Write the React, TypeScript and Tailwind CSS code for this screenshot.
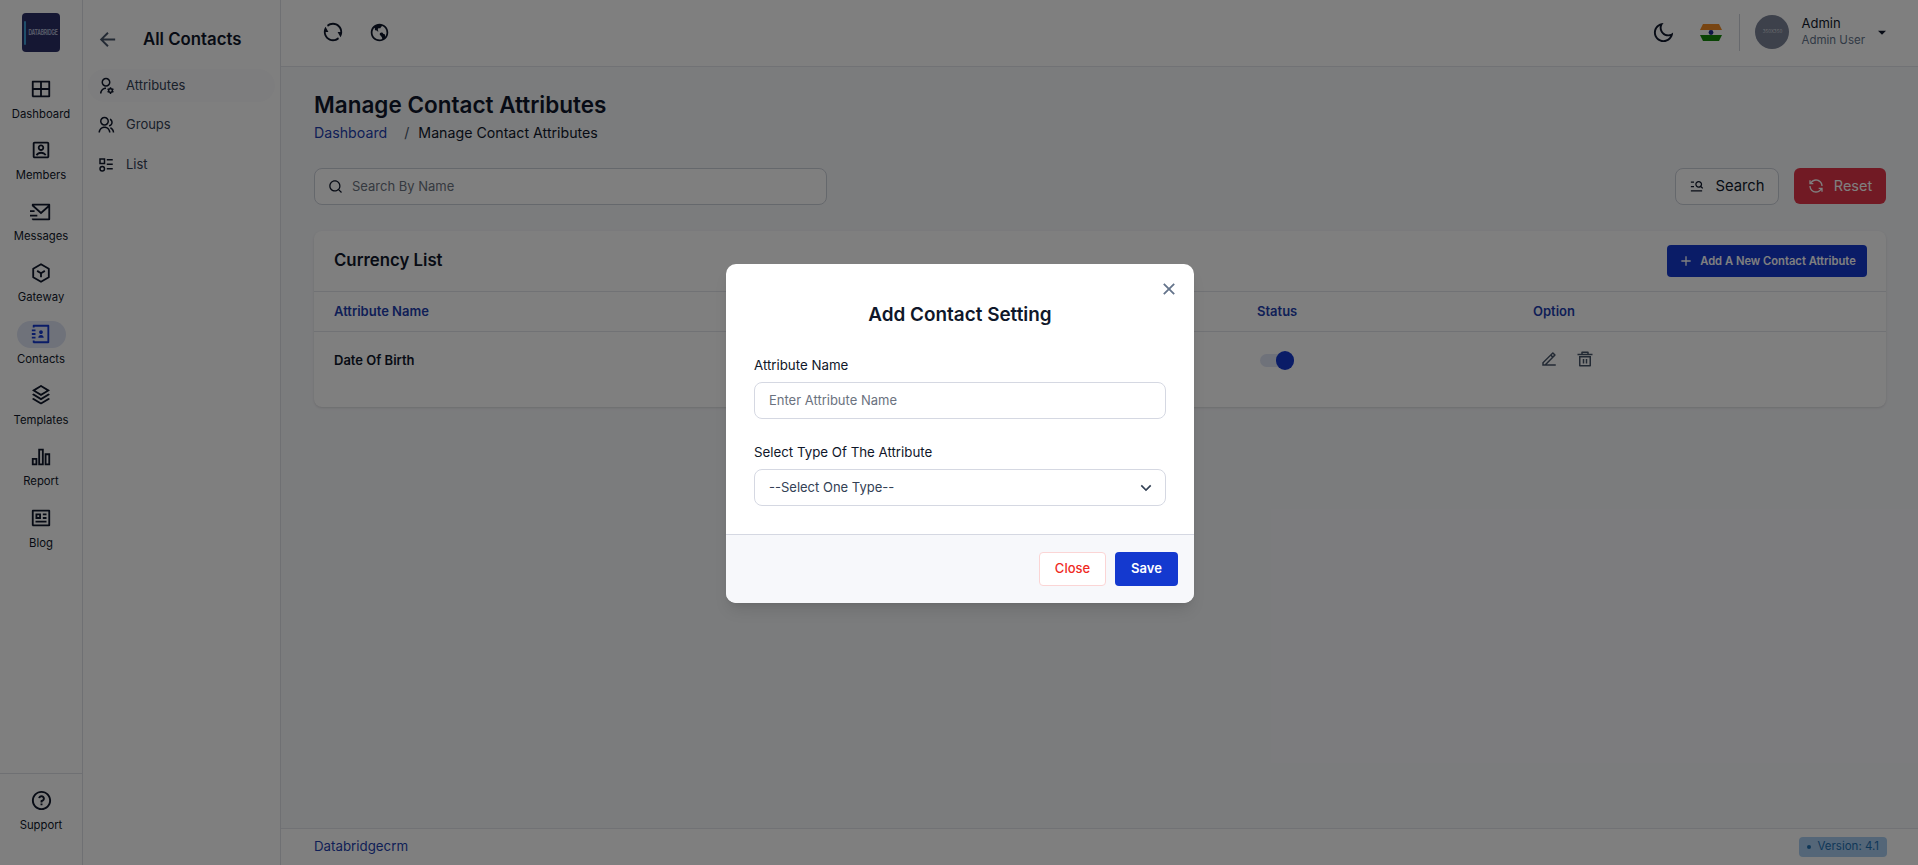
import {
  RiAccountBoxLine,
  RiAddLine,
  RiArrowDownSFill,
  RiArrowDownSLine,
  RiArrowLeftLine,
  RiBarChart2Line,
  RiCloseLine,
  RiContactsBook3Line,
  RiDeleteBin5Line,
  RiEarthLine,
  RiEdit2Line,
  RiGroupLine,
  RiLayoutGridLine,
  RiLoopLeftLine,
  RiMailSendLine,
  RiMenuSearchLine,
  RiMoonLine,
  RiProfileLine,
  RiQuestionLine,
  RiRefreshLine,
  RiSearchLine,
  RiStackLine,
  RiUserSettingsLine,
} from "react-icons/ri";

type IconProps = { className?: string };

const GatewayIcon = ({ className }: IconProps) => (
  <svg viewBox="0 0 24 24" fill="none" stroke="currentColor" strokeWidth="2" strokeLinejoin="round" className={className}>
    <path d="M12 2.5 20.5 7.3v9.4L12 21.5l-8.5-4.8V7.3z" />
    <path d="M7.8 9.7 12 12.2l4.2-2.5M12 12.2v4.3" />
  </svg>
);

const ListIcon = ({ className }: IconProps) => (
  <svg viewBox="0 0 24 24" fill="none" stroke="currentColor" strokeWidth="2" className={className}>
    <rect x="4" y="4" width="6" height="6" />
    <circle cx="7" cy="17" r="3" />
    <path d="M13 5h8M13 11h8M13 17h8" />
  </svg>
);

const railItems = [
  { label: "Dashboard", icon: RiLayoutGridLine },
  { label: "Members", icon: RiAccountBoxLine },
  { label: "Messages", icon: RiMailSendLine },
  { label: "Gateway", icon: GatewayIcon },
  { label: "Contacts", icon: RiContactsBook3Line, active: true },
  { label: "Templates", icon: RiStackLine },
  { label: "Report", icon: RiBarChart2Line },
  { label: "Blog", icon: RiProfileLine },
];

const subItems = [
  { label: "Attributes", icon: RiUserSettingsLine, active: true },
  { label: "Groups", icon: RiGroupLine },
  { label: "List", icon: ListIcon },
];

const Logo = () => (
  <div className="flex h-[39px] w-[38px] items-center justify-center overflow-hidden rounded-[4px] bg-[#2b2e66]">
    <div className="h-[24px] w-[2px] rounded-full bg-[#3f9fd6]" />
    <span className="ml-[2px] scale-y-150 text-[5px] leading-none font-bold tracking-tighter whitespace-nowrap text-[#aab2d0]">
      DATABRIDGE
    </span>
  </div>
);

const IndiaFlag = () => (
  <svg width="22" height="17" viewBox="0 0 22 17">
    <path d="M3 0h16l3 6H0z" fill="#f08a24" />
    <rect x="0" y="6" width="22" height="5" fill="#ffffff" />
    <path d="M0 11h22l-3 6H3z" fill="#138808" />
    <circle cx="11" cy="8.5" r="2.4" fill="#1a2a8a" />
  </svg>
);

export default function App() {
  return (
    <div className="relative flex h-[865px] w-full overflow-hidden bg-white font-['Inter',sans-serif] text-[#0f172a]">
      {/* icon rail */}
      <aside className="flex w-[83px] shrink-0 flex-col border-r border-[#dfe1e6]">
        <div className="flex justify-center pt-[13px] pb-[21.5px]">
          <Logo />
        </div>
        <nav className="flex flex-1 flex-col">
          {railItems.map((item) => (
            <div key={item.label} className="flex h-[61.3px] flex-col items-center pt-[2px]">
              <div
                className={`flex h-[27px] w-[49px] items-center justify-center rounded-full ${
                  item.active ? "bg-[#dfe4f4] text-[#1439cf]" : ""
                }`}
              >
                <item.icon className="h-[22px] w-[22px]" />
              </div>
              <span className="mt-[4px] text-[11.3px] leading-[15px]">{item.label}</span>
            </div>
          ))}
        </nav>
        <div className="flex h-[92px] flex-col items-center border-t border-[#dfe1e6] pt-[15px]">
          <RiQuestionLine className="h-[23px] w-[23px]" />
          <span className="mt-[6px] text-[11.3px] leading-[15px]">Support</span>
        </div>
      </aside>

      {/* section menu */}
      <aside className="flex w-[198px] shrink-0 flex-col border-r border-[#dfe1e6] px-[5px]">
        <div className="flex h-[69px] items-center pt-[10px] pl-[8px]">
          <RiArrowLeftLine className="h-[23px] w-[23px] text-[#475569]" />
          <h2 className="ml-[24px] text-[16.8px] font-semibold">All Contacts</h2>
        </div>
        <ul className="flex flex-col">
          {subItems.map((item) => (
            <li
              key={item.label}
              className={`mb-[6.5px] flex h-[33px] items-center gap-[11px] rounded-full pl-[9px] text-[13px] text-[#334155] ${
                item.active ? "bg-[#fbfbfc]" : ""
              }`}
            >
              <item.icon className="h-[18px] w-[18px] text-[#0f172a]" />
              {item.label}
            </li>
          ))}
        </ul>
      </aside>

      {/* main column */}
      <div className="flex min-w-0 flex-1 flex-col bg-[#f7f8fb]">
        <header className="flex h-[67px] shrink-0 items-center justify-between border-b border-[#e2e4ea] bg-white pr-[28px] pb-[2px] pl-[41px]">
          <div className="flex items-center gap-[25px]">
            <RiRefreshLine className="h-[22px] w-[22px]" />
            <RiEarthLine className="h-[21px] w-[21px]" />
          </div>
          <div className="flex items-center">
            <RiMoonLine className="h-[23px] w-[23px]" />
            <div className="ml-[25px]">
              <IndiaFlag />
            </div>
            <div className="mr-[15px] ml-[17px] h-[37px] w-px bg-[#cfd3da]" />
            <div className="flex h-[34px] w-[34px] items-center justify-center rounded-full bg-[#7a8296]">
              <span className="text-[4.5px] text-[#d5d8de]">350X350</span>
            </div>
            <div className="ml-[12px] flex flex-col">
              <span className="text-[13px] leading-[17px]">Admin</span>
              <span className="text-[11.5px] leading-[17px] text-[#64748b]">Admin User</span>
            </div>
            <RiArrowDownSFill className="ml-[9px] h-[16px] w-[16px]" />
          </div>
        </header>

        <main className="flex flex-1 flex-col pt-[22px] pr-[32px] pl-[33px]">
          <h1 className="text-[22.5px] leading-[32px] font-semibold">Manage Contact Attributes</h1>
          <div className="mt-[2px] flex items-center text-[14.2px] leading-[20px]">
            <span className="text-[#1e3fae]">Dashboard</span>
            <span className="mr-[9px] ml-[17px] text-[#475569]">/</span>
            <span>Manage Contact Attributes</span>
          </div>

          <div className="mt-[25px] flex items-start justify-between">
            <div className="flex h-[37px] w-[513px] items-center gap-[9px] rounded-[8px] border border-[#cbd0d9] bg-white px-[13px]">
              <RiSearchLine className="h-[15px] w-[15px]" />
              <span className="text-[13px] text-[#6b7280]">Search By Name</span>
            </div>
            <div className="flex items-start gap-[15px]">
              <button className="flex h-[37px] w-[104px] items-center justify-center gap-[11px] rounded-[8px] border border-[#cbd0d9] bg-white text-[14.8px]">
                <RiMenuSearchLine className="h-[15px] w-[15px]" />
                Search
              </button>
              <button className="flex h-[36px] w-[92px] items-center justify-center gap-[10px] rounded-[6px] bg-[#e23548] text-[14.5px] text-white">
                <RiLoopLeftLine className="h-[16px] w-[16px]" />
                Reset
              </button>
            </div>
          </div>

          <section className="mt-[26px] rounded-[8px] bg-white shadow-sm">
            <div className="flex h-[61px] items-center justify-between border-b border-[#e2e4ea] pr-[19px] pl-[20px]">
              <h3 className="text-[16.8px] font-semibold">Currency List</h3>
              <button className="flex h-[32px] w-[200px] items-center justify-center gap-[6px] rounded-[4px] bg-[#1439cf] text-[11.2px] font-semibold text-white">
                <RiAddLine className="h-[16px] w-[16px]" />
                Add A New Contact Attribute
              </button>
            </div>
            <div className="grid h-[40px] grid-cols-[923px_276px_1fr] items-center border-b border-[#e2e4ea] pl-[20px] text-[13px] font-semibold text-[#1e3fae]">
              <span>Attribute Name</span>
              <span>Status</span>
              <span>Option</span>
            </div>
            <div className="grid h-[75px] grid-cols-[923px_276px_1fr] pt-[18px] pl-[20px] text-[13px] font-semibold">
              <span className="leading-[20px]">Date Of Birth</span>
              <div className="relative ml-[3px] h-[13px] w-[34px] translate-y-[4px] rounded-full bg-[#dfe4f4]">
                <div className="absolute top-[-3px] right-0 h-[19px] w-[18px] rounded-full bg-[#1439cf]" />
              </div>
              <div className="flex gap-[18px] pl-[7px] text-[#475569]">
                <RiEdit2Line className="h-[18px] w-[18px]" />
                <RiDeleteBin5Line className="h-[18px] w-[18px]" />
              </div>
            </div>
          </section>

          <div className="flex-1" />
          <footer className="-mr-[32px] -ml-[33px] flex h-[37px] items-center justify-between border-t border-[#e2e4ea] bg-white pr-[31px] pl-[33px]">
            <span className="text-[13.3px] text-[#1e3fae]">Databridgecrm</span>
            <span className="flex h-[20px] items-center gap-[6px] rounded-[4px] bg-[#a8cdf0] px-[8px] text-[11.5px] text-[#1f6fb0]">
              <span className="h-[4px] w-[4px] rounded-full bg-[#1f6fb0]" />
              Version: 4.1
            </span>
          </footer>
        </main>
      </div>

      {/* modal */}
      <div className="absolute inset-0 flex items-center justify-center bg-black/50 pt-[2px] pl-[2px]">
        <div className="relative w-[468px] overflow-hidden rounded-[10px] bg-white shadow-lg">
          <RiCloseLine className="absolute top-[14px] right-[14px] h-[22px] w-[22px] text-[#64748b]" />
          <div className="px-[28px] pt-[38px] pb-[28px]">
            <h2 className="text-center text-[18.9px] leading-[26px] font-semibold">Add Contact Setting</h2>
            <label className="mt-[27px] block text-[13.3px] leading-[20px]">Attribute Name</label>
            <div className="mt-[7px] flex h-[37px] items-center rounded-[8px] border border-[#d5d8e2] px-[14px] text-[13px] text-[#6b7280]">
              Enter Attribute Name
            </div>
            <label className="mt-[23px] block text-[13.3px] leading-[20px]">Select Type Of The Attribute</label>
            <div className="mt-[7px] flex h-[37px] items-center justify-between rounded-[8px] border border-[#d5d8e2] pr-[9px] pl-[14px] text-[13px] text-[#334155]">
              --Select One Type--
              <RiArrowDownSLine className="h-[20px] w-[20px]" />
            </div>
          </div>
          <div className="flex h-[69px] items-center justify-end gap-[9px] border-t border-[#d5d8e2] bg-[#f7f8fb] pr-[16px]">
            <button className="h-[34px] w-[67px] rounded-[4px] border border-[#fbd5d5] bg-white text-[13px] font-medium text-[#ef2b1f]">
              Close
            </button>
            <button className="h-[34px] w-[63px] rounded-[4px] bg-[#1439cf] text-[13px] font-semibold text-white">
              Save
            </button>
          </div>
        </div>
      </div>
    </div>
  );
}
